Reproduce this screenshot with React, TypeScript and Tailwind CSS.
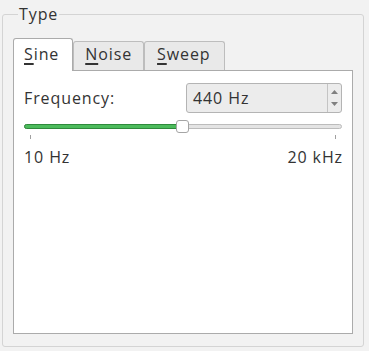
export default function App() {
  return (
    <div
      className="w-[369px] h-[351px] bg-[#f2f2f2] pl-[2px] pr-[5px] pt-[4px] text-[#333] tracking-[0.9px]"
      style={{ fontFamily: '"Open Sans", "Noto Sans", sans-serif' }}
    >
      <fieldset className="h-[343px] border border-[#d4d4d4] rounded-[3px] px-[10px]">
        <legend className="ml-[5px] px-[1px] text-[16px] leading-[20px]">Type</legend>

        {/* tab bar */}
        <div className="mt-[14px] flex items-end text-[16px]">
          <Tab label="Sine" active />
          <Tab label="Noise" className="pl-[11px] pr-[11px]" />
          <Tab label="Sweep" className="pl-[12px] pr-[13px]" />
        </div>

        {/* tab pane */}
        <div className="h-[264px] border border-[#ababab] bg-white px-[10px] pt-[12px]">
          <div className="flex items-center justify-between">
            <span className="text-[16px] leading-[20px]">Frequency:</span>
            <SpinBox value="440 Hz" />
          </div>

          <Slider fraction={0.498} />

          <div className="mt-[2px] flex justify-between px-[6px]">
            <div className="h-[4px] w-px bg-[#a0a0a0]" />
            <div className="h-[4px] w-px bg-[#a0a0a0]" />
          </div>

          <div className="mt-[8px] flex justify-between text-[16px] leading-[20px]">
            <span>10 Hz</span>
            <span className="-mr-[1px]">20 kHz</span>
          </div>
        </div>
      </fieldset>
    </div>
  )
}

function Tab({ label, active = false, className = '' }: { label: string; active?: boolean; className?: string }) {
  const first = label.charAt(0)
  const rest = label.slice(1)
  return (
    <div
      className={
        active
          ? 'relative z-10 -mb-px h-[33px] rounded-t-[3px] border border-b-0 border-[#ababab] bg-white pl-[10px] pr-[13px] pt-[4px] leading-[22px]'
          : `h-[29px] rounded-t-[3px] border border-b-0 border-[#bdbdbd] bg-[#e9e9e9] pt-[1px] leading-[22px] ${className}`
      }
    >
      <span className="underline decoration-[1.5px] underline-offset-[3px]">{first}</span>
      {rest}
    </div>
  )
}

function SpinBox({ value }: { value: string }) {
  return (
    <div className="flex h-[30px] w-[156px] rounded-[3px] border border-[#b4b4b4] bg-[#ececec]">
      <div className="flex-1 pl-[6px] text-[16px] leading-[28px]">{value}</div>
      <div className="flex w-[14px] flex-col items-center justify-center gap-[8px] border-l border-[#c4c4c4]">
        <svg width="7" height="4" viewBox="0 0 7 4">
          <path d="M3.5 0L7 4H0z" fill="#808080" />
        </svg>
        <svg width="7" height="4" viewBox="0 0 7 4">
          <path d="M0 0H7L3.5 4z" fill="#808080" />
        </svg>
      </div>
    </div>
  )
}

function Slider({ fraction }: { fraction: number }) {
  const handle = 13
  return (
    <div className="relative mt-[7px] h-[13px]">
      <div className="absolute left-0 right-0 top-[4px] h-[5px] rounded-full border border-[#bcbcbc] bg-[#e4e4e4]" />
      <div
        className="absolute left-0 top-[4px] h-[5px] rounded-full border border-[#2f8a3c] bg-[#4cbb5c]"
        style={{ width: `calc(${fraction} * (100% - ${handle}px) + ${handle / 2}px)` }}
      />
      <div
        className="absolute top-0 h-[13px] w-[13px] rounded-[3px] border border-[#a5a5a5] bg-white"
        style={{ left: `calc(${fraction} * (100% - ${handle}px))` }}
      />
    </div>
  )
}
